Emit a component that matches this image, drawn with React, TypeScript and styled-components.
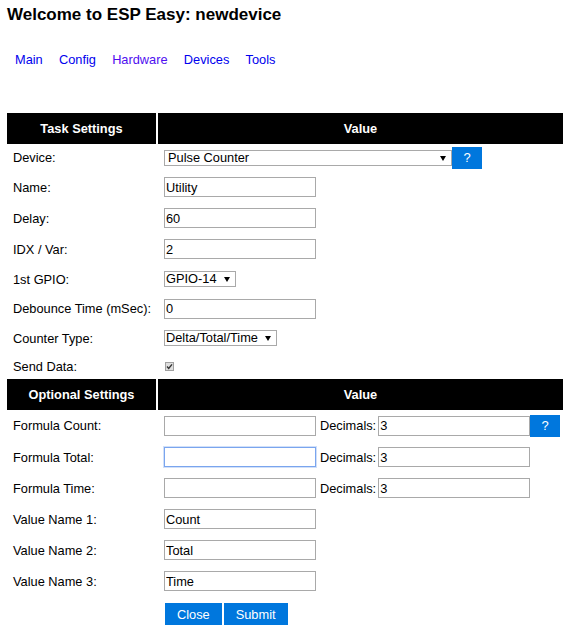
import React from 'react';
import styled, { createGlobalStyle } from 'styled-components';

const Global = createGlobalStyle`
  html, body { margin: 0; padding: 0; background: #fff; }
  body {
    font-family: "Liberation Sans", Arial, sans-serif;
    font-size: 12.8px;
    color: #000;
  }
`;

const Page = styled.div`
  padding: 0 7px;
`;

const Title = styled.h1`
  margin: 5px 0 0;
  font-size: 17px;
  line-height: 20px;
  font-weight: bold;
`;

const Nav = styled.nav`
  display: flex;
  gap: 16.2px;
  margin: 27px 0 0 8px;
  line-height: 15px;
`;

const NavLink = styled.a<{ $visited?: boolean }>`
  color: ${(p) => (p.$visited ? '#4f0ef0' : '#0000ee')};
  text-decoration: none;
  font-size: 12.8px;
`;

const Table = styled.table`
  margin-top: 46px;
  width: 100%;
  table-layout: fixed;
  border-collapse: separate;
  border-spacing: 0;
`;

const Head = styled.th<{ $first?: boolean }>`
  background: #000;
  color: #fff;
  font-weight: bold;
  font-size: 12.8px;
  height: 31px;
  padding: 0;
  text-align: center;
  vertical-align: middle;
  width: ${(p) => (p.$first ? '149px' : 'auto')};
  border-left: ${(p) => (p.$first ? '0' : '2px solid #fff')};
`;

const Row = styled.tr<{ $h: number }>`
  height: ${(p) => p.$h}px;
`;

const Cell = styled.td<{ $value?: boolean }>`
  padding: 0 6px;
  vertical-align: middle;
  white-space: nowrap;
  overflow: visible;
  border-left: ${(p) => (p.$value ? '2px solid #fff' : '0')};
`;

const Line = styled.div`
  display: flex;
  align-items: center;
  & > * {
    flex-shrink: 0;
  }
`;

const TextInput = styled.input<{ $w?: number }>`
  box-sizing: border-box;
  width: ${(p) => p.$w ?? 152}px;
  height: 20px;
  margin: 0;
  padding: 0 1px;
  border: 1px solid #a9a9a9;
  background: #fff;
  color: #000;
  font-family: inherit;
  font-size: 12.8px;
  outline: none;
  caret-color: #000;
  &:focus {
    border-color: #7aa5ee;
    box-shadow: 0 0 0 1px rgba(122, 165, 238, 0.35);
  }
`;

const SelectWrap = styled.span<{ $w: number }>`
  position: relative;
  display: inline-block;
  width: ${(p) => p.$w}px;
  height: 16px;
`;

const Select = styled.select<{ $indent?: number }>`
  appearance: none;
  -webkit-appearance: none;
  box-sizing: border-box;
  width: 100%;
  height: 16px;
  margin: 0;
  padding: 0 14px 0 ${(p) => p.$indent ?? 1}px;
  border: 1px solid #a9a9a9;
  border-radius: 0;
  background: #fff;
  color: #000;
  font-family: inherit;
  font-size: 12.8px;
  line-height: 14px;
  outline: none;
`;

const Arrow = styled.svg`
  position: absolute;
  right: 6px;
  top: 6px;
  pointer-events: none;
`;

const Help = styled.button`
  box-sizing: border-box;
  width: 30px;
  height: 22px;
  margin: 0;
  padding: 0;
  border: 0;
  background: #0077dd;
  color: #fff;
  font-family: inherit;
  font-size: 13px;
  cursor: pointer;
`;

const Label = styled.span`
  margin: 0 2px 0 4px;
`;

const Check = styled.svg`
  display: block;
  margin-left: 1px;
`;

const Actions = styled.div`
  display: flex;
  gap: 2px;
  padding: 6.5px 0 0 1px;
`;

const Action = styled.button`
  height: 23px;
  margin: 0;
  padding: 0 12px;
  border: 0;
  background: #0077dd;
  color: #fff;
  font-family: inherit;
  font-size: 12.8px;
  cursor: pointer;
`;

const DropDown: React.FC<{ w: number; value: string; options: string[]; indent?: number }> = ({
  w,
  value,
  options,
  indent,
}) => (
  <SelectWrap $w={w}>
    <Select $indent={indent} defaultValue={value}>
      {options.map((o) => (
        <option key={o}>{o}</option>
      ))}
    </Select>
    <Arrow width="6" height="5" viewBox="0 0 6 5">
      <polygon points="0,0 6,0 3,5" fill="#000" />
    </Arrow>
  </SelectWrap>
);

const InputRow: React.FC<{ label: string; value?: string; h?: number }> = ({ label, value = '', h = 31 }) => (
  <Row $h={h}>
    <Cell>{label}</Cell>
    <Cell $value>
      <Line>
        <TextInput defaultValue={value} />
      </Line>
    </Cell>
  </Row>
);

const FormulaRow: React.FC<{ label: string; h: number; help?: boolean; focus?: boolean }> = ({
  label,
  h,
  help,
  focus,
}) => (
  <Row $h={h}>
    <Cell>{label}</Cell>
    <Cell $value>
      <Line>
        <TextInput defaultValue="" autoFocus={focus} />
        <Label>Decimals:</Label>
        <TextInput defaultValue="3" />
        {help && <Help>?</Help>}
      </Line>
    </Cell>
  </Row>
);

export default function App() {
  return (
    <>
      <Global />
      <Page>
        <Title>Welcome to ESP Easy: newdevice</Title>
        <Nav>
          <NavLink href="#">Main</NavLink>
          <NavLink href="#">Config</NavLink>
          <NavLink href="#" $visited>
            Hardware
          </NavLink>
          <NavLink href="#">Devices</NavLink>
          <NavLink href="#">Tools</NavLink>
        </Nav>
        <Table>
          <tbody>
            <tr>
              <Head $first>Task Settings</Head>
              <Head>Value</Head>
            </tr>
            <Row $h={27.5}>
              <Cell>Device:</Cell>
              <Cell $value>
                <Line>
                  <DropDown w={288} value="Pulse Counter" options={['Pulse Counter']} indent={3} />
                  <Help>?</Help>
                </Line>
              </Cell>
            </Row>
            <InputRow label="Name:" value="Utility" />
            <InputRow label="Delay:" value="60" />
            <InputRow label="IDX / Var:" value="2" />
            <Row $h={29}>
              <Cell>1st GPIO:</Cell>
              <Cell $value>
                <Line>
                  <DropDown w={72} value="GPIO-14" options={['GPIO-14']} />
                </Line>
              </Cell>
            </Row>
            <InputRow label="Debounce Time (mSec):" value="0" h={30} />
            <Row $h={29.5}>
              <Cell>Counter Type:</Cell>
              <Cell $value>
                <Line>
                  <DropDown w={113} value="Delta/Total/Time" options={['Delta/Total/Time']} />
                </Line>
              </Cell>
            </Row>
            <Row $h={26}>
              <Cell>Send Data:</Cell>
              <Cell $value>
                <Check width="9" height="9" viewBox="0 0 9 9">
                  <rect x="0.5" y="0.5" width="8" height="8" fill="#dedede" stroke="#a0a0a0" />
                  <path d="M2 4.6 L3.7 6.4 L7 2.4" fill="none" stroke="#333" strokeWidth="1.4" />
                </Check>
              </Cell>
            </Row>
            <tr>
              <Head $first>Optional Settings</Head>
              <Head>Value</Head>
            </tr>
            <FormulaRow label="Formula Count:" h={31.5} help />
            <FormulaRow label="Formula Total:" h={31} focus />
            <FormulaRow label="Formula Time:" h={31} />
            <InputRow label="Value Name 1:" value="Count" />
            <InputRow label="Value Name 2:" value="Total" />
            <InputRow label="Value Name 3:" value="Time" />
            <tr>
              <Cell />
              <Cell $value>
                <Actions>
                  <Action>Close</Action>
                  <Action>Submit</Action>
                </Actions>
              </Cell>
            </tr>
          </tbody>
        </Table>
      </Page>
    </>
  );
}
